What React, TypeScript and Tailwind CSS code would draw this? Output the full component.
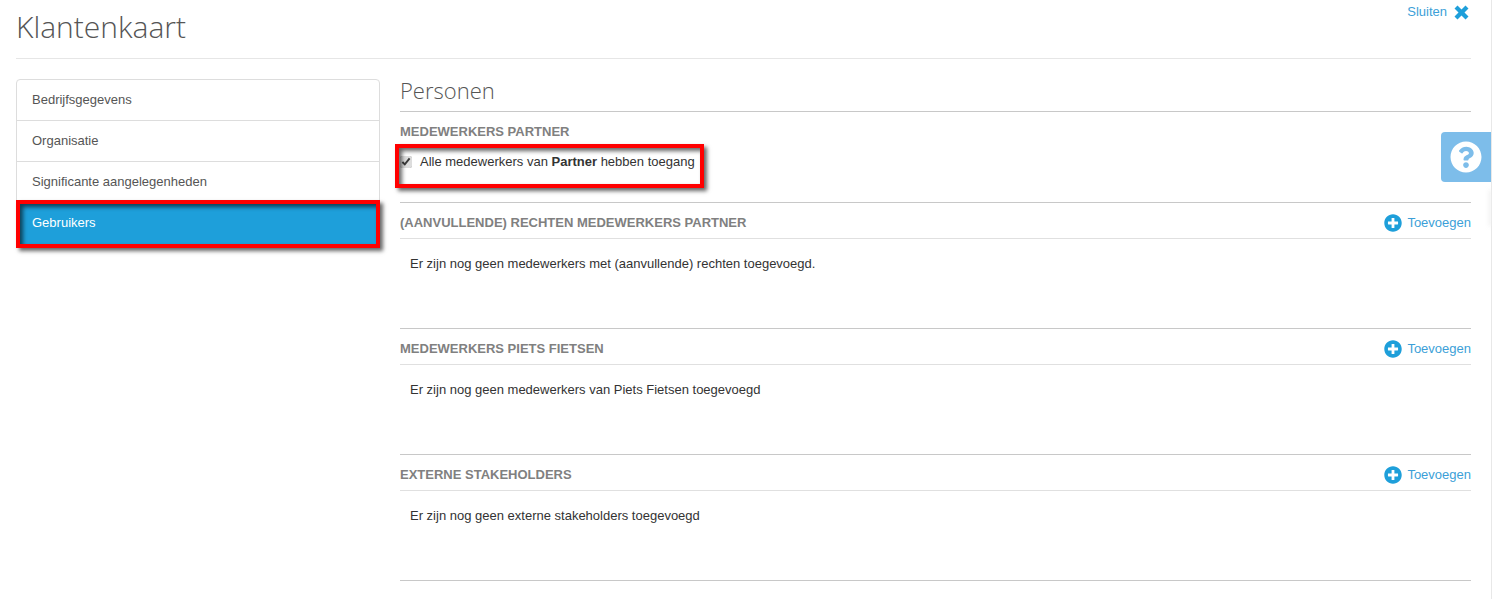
import React from 'react';
import { FaPlusCircle, FaQuestionCircle } from 'react-icons/fa';

const Section = ({ title, text }: { title: string; text: string }) => (
  <section className="h-[126px] border-t border-[#c8c8c8]">
    <div className="h-[36px] border-b border-[#e0e0e0] flex items-center justify-between pt-[5px]">
      <h3 className="text-[13px] font-bold text-[#808080]">{title}</h3>
      <a className="flex items-center gap-[5px] text-[13px] text-[#3c9fd8]">
        <FaPlusCircle size={18} className="text-[#1e9fda]" />
        Toevoegen
      </a>
    </div>
    <p className="pl-[10px] pt-[16px] text-[13px] leading-[17px] text-[#333]">{text}</p>
  </section>
);

const menu = ['Bedrijfsgegevens', 'Organisatie', 'Significante aangelegenheden'];

export default function App() {
  return (
    <div className="relative h-[599px] overflow-hidden bg-white pl-[16px] pr-[21px] font-['Liberation_Sans',sans-serif]">
      <header className="relative h-[59px] border-b border-[#e6e6e6]">
        <h1 className="pt-[8px] font-['Open_Sans',sans-serif] font-light text-[30px] leading-[38px] text-[#555]">Klantenkaart</h1>
        <a className="absolute right-0 top-[2px] flex items-center gap-[4px] text-[13px] text-[#3c9fd8]">
          <span className="-mt-[1px]">Sluiten</span>
          <svg viewBox="0 0 20 20" className="w-[20px] h-[20px]">
            <path d="M3.5 6.5l3-3 4 4 4-4 3 3-4 4 4 4-3 3-4-4-4 4-3-3 4-4z" fill="#1e9fda" />
          </svg>
        </a>
      </header>

      <div className="flex gap-[20px] pt-[20px]">
        <nav className="relative w-[364px] shrink-0 self-start rounded-[4px] border border-[#ddd] text-[13px] text-[#555]">
          {menu.map((m) => (
            <div key={m} className="h-[41px] border-b border-[#ddd] pl-[15px] flex items-center">{m}</div>
          ))}
          <div className="h-[42px] bg-[#1e9fda] pl-[15px] pb-[2px] flex items-center text-white">Gebruikers</div>
          <div className="absolute -left-[1px] -right-[1px] top-[120px] h-[48px] border-[4px] border-[#f00] shadow-[3px_3px_4px_rgba(0,0,0,0.6),inset_3px_3px_4px_rgba(0,0,0,0.6)]" />
        </nav>

        <main className="flex-1 min-w-0">
          <h2 className="-mt-[1px] h-[34px] border-b border-[#c8c8c8] font-['Open_Sans',sans-serif] font-light text-[22px] leading-[24px] text-[#555]">Personen</h2>
          <section className="relative h-[90px]">
            <h3 className="pt-[12px] text-[13px] leading-[15px] font-bold text-[#808080]">MEDEWERKERS PARTNER</h3>
            <label className="mt-[14px] flex items-center gap-[8px] text-[13px] leading-[17px] text-[#333]">
              <input type="checkbox" defaultChecked readOnly className="w-[12px] h-[12px] accent-[#ddd]" />
              <span>Alle medewerkers van <b>Partner</b> hebben toegang</span>
            </label>
            <div className="absolute -left-[5px] top-[32px] w-[309px] h-[44px] border-[4px] border-[#f00] shadow-[3px_3px_4px_rgba(0,0,0,0.6),inset_3px_3px_4px_rgba(0,0,0,0.6)]" />
          </section>
          <Section title="(AANVULLENDE) RECHTEN MEDEWERKERS PARTNER" text="Er zijn nog geen medewerkers met (aanvullende) rechten toegevoegd." />
          <Section title="MEDEWERKERS PIETS FIETSEN" text="Er zijn nog geen medewerkers van Piets Fietsen toegevoegd" />
          <Section title="EXTERNE STAKEHOLDERS" text="Er zijn nog geen externe stakeholders toegevoegd" />
          <div className="border-t border-[#c8c8c8]" />
        </main>
      </div>

      <div className="absolute left-[1441px] top-[132px] w-[50px] h-[50px] rounded-l-[4px] bg-[#7dbdea] flex items-center justify-center">
        <FaQuestionCircle size={32} className="text-white" />
      </div>
      <div className="absolute right-0 top-0 bottom-0 w-px bg-[#e8e8e8]" />
      <div className="absolute right-0 top-[190px] w-[3px] h-[36px] bg-[#eee] blur-[2px]" />
    </div>
  );
}
